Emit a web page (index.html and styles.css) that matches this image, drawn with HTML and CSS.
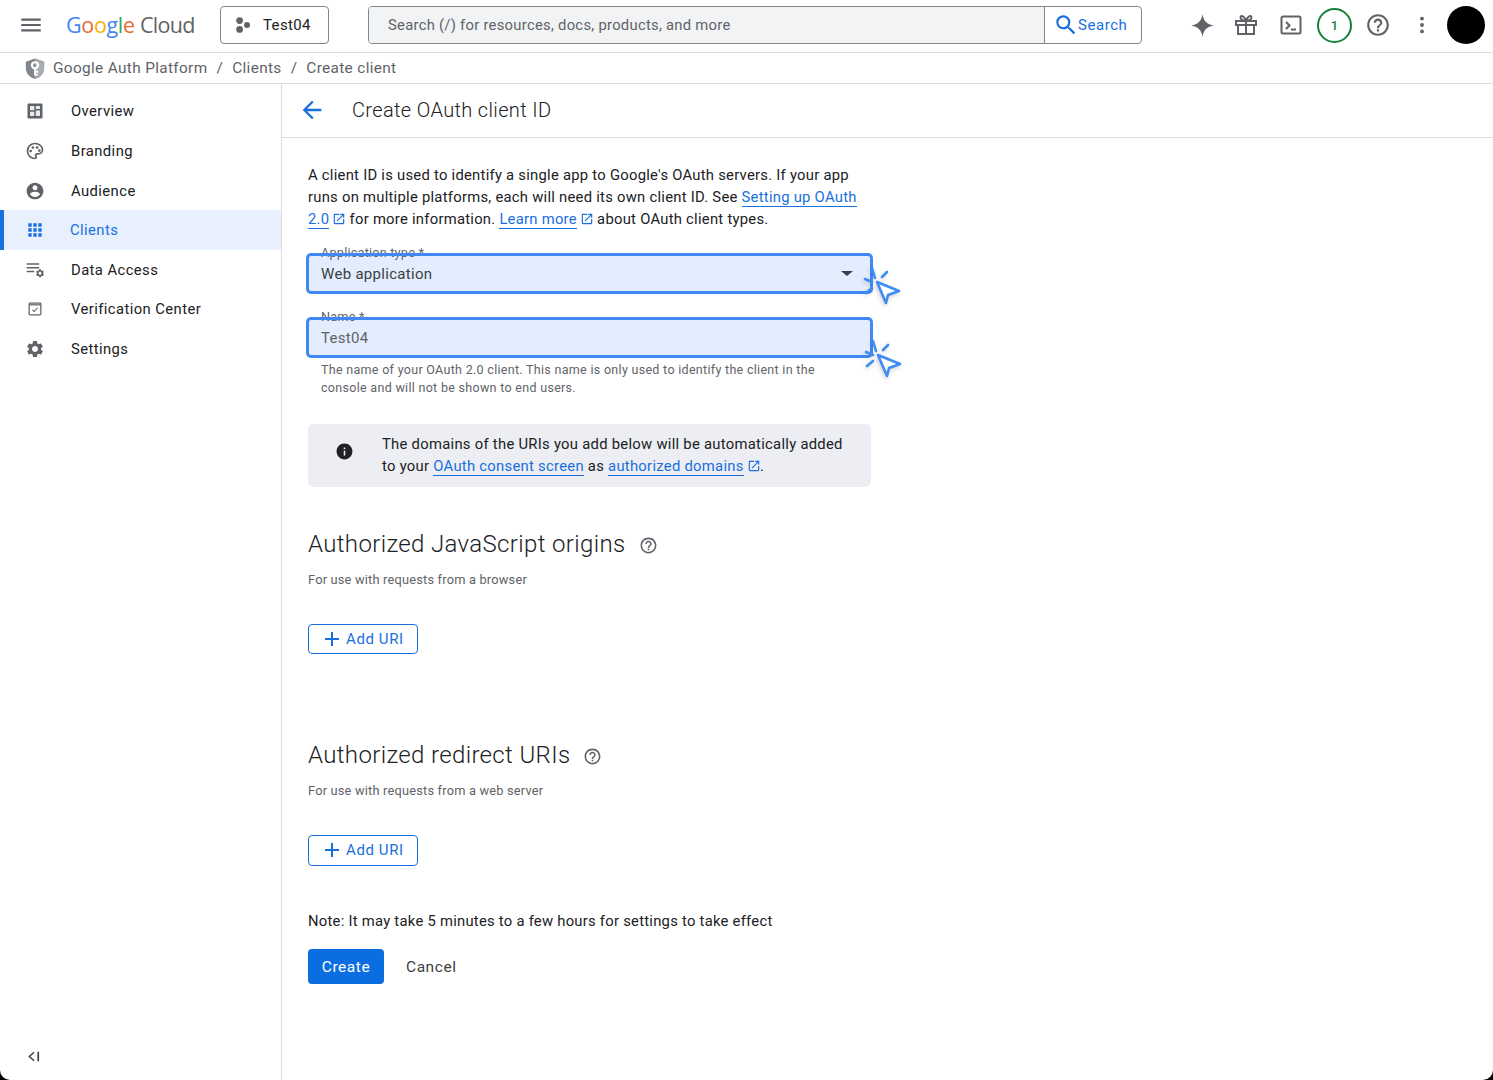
FILE: index.html
```html
<!DOCTYPE html>
<html lang="en">
<head>
<meta charset="utf-8">
<title>Create OAuth client ID</title>
<link rel="stylesheet" href="styles.css">
</head>
<body>
<svg class="defs" width="0" height="0" aria-hidden="true">
  <symbol id="i-help" viewBox="0 0 24 24"><path d="M11 18h2v-2h-2v2zm1-16C6.48 2 2 6.48 2 12s4.48 10 10 10 10-4.48 10-10S17.52 2 12 2zm0 18c-4.41 0-8-3.59-8-8s3.59-8 8-8 8 3.59 8 8-3.59 8-8 8zm0-14c-2.21 0-4 1.79-4 4h2c0-1.1.9-2 2-2s2 .9 2 2c0 2-3 1.75-3 5h2c0-2.25 3-2.5 3-5 0-2.21-1.79-4-4-4z"/></symbol>
  <symbol id="i-open" viewBox="0 0 24 24"><path d="M19 19H5V5h7V3H5c-1.11 0-2 .9-2 2v14c0 1.1.89 2 2 2h14c1.1 0 2-.9 2-2v-7h-2v7zM14 3v2h3.59l-9.83 9.83 1.41 1.41L19 6.41V10h2V3h-7z"/></symbol>
  <symbol id="i-add" viewBox="0 0 24 24"><path d="M19 13h-6v6h-2v-6H5v-2h6V5h2v6h6v2z"/></symbol>
  <symbol id="i-cursor" viewBox="0 0 44 44"><g fill="none" stroke="#3f8cf5" stroke-width="2.600" stroke-linecap="round" stroke-linejoin="round"><path d="M17 17l22 9-11 4-2 8z" fill="#fff"/><path d="M12 3l3 10M27 7l-5 5M5 14l7 3M6 28l6-5"/></g></symbol>
</svg>
<div class="app">
  <header class="topbar">
    <button class="icon-btn menu" aria-label="Menu"><svg viewBox="0 0 24 24" class="ic24"><path d="M3 18h18v-2H3v2zm0-5h18v-2H3v2zm0-7v2h18V6H3z"/></svg></button>
    <div class="logo"><span class="lb">G</span><span class="lr">o</span><span class="ly">o</span><span class="lb">g</span><span class="lg">l</span><span class="lr">e</span> <span class="lc">Cloud</span></div>
    <button class="project">
      <svg viewBox="0 0 16 16" class="ic-project"><circle cx="4.600" cy="3.600" r="3.400"/><circle cx="12" cy="8" r="3"/><circle cx="4.600" cy="12.400" r="3.400"/></svg>
      <span>Test04</span>
    </button>
    <div class="search">
      <div class="search-input">Search (/) for resources, docs, products, and more</div>
      <button class="search-btn"><svg viewBox="0 0 24 24" class="ic-search"><path d="M15.5 14h-.79l-.28-.27A6.471 6.471 0 0 0 16 9.5 6.5 6.5 0 1 0 9.5 16c1.61 0 3.09-.59 4.23-1.57l.27.28v.79l5 4.99L20.49 19l-4.99-5zm-6 0C7.01 14 5 11.99 5 9.5S7.01 5 9.5 5 14 7.01 14 9.5 11.99 14 9.5 14z"/></svg><span>Search</span></button>
    </div>
    <div class="tools">
      <svg viewBox="0 0 24 24" class="tool spark"><path d="M12 1C12.900 7.600 16.400 11.100 23 12 16.400 12.900 12.900 16.400 12 23 11.100 16.400 7.600 12.900 1 12 7.600 11.100 11.100 7.600 12 1z"/></svg>
      <svg viewBox="0 0 24 24" class="tool gift"><g fill="none" stroke="#5f6368" stroke-width="2"><path d="M2 8h20v4H2zM4 12v9h16v-9M12 8v13"/><path d="M12 7.500C10 3 6.500 1.500 6.500 4.500c0 2 2.500 3 5.500 3zM12 7.500c2-4.500 5.500-6 5.500-3 0 2-2.500 3-5.500 3z"/></g></svg>
      <svg viewBox="0 0 24 24" class="tool term"><rect x="2.500" y="3.500" width="19" height="17" rx="1.500" fill="none" stroke="#5f6368" stroke-width="2"/><path d="M7 9l3.500 3.500L7 16M12 16.500h5" fill="none" stroke="#5f6368" stroke-width="2"/></svg>
      <span class="badge">1</span>
      <svg class="tool help"><use href="#i-help"/></svg>
      <svg viewBox="0 0 24 24" class="tool more"><circle cx="12" cy="5" r="2.100"/><circle cx="12" cy="12" r="2.100"/><circle cx="12" cy="19" r="2.100"/></svg>
      <span class="avatar"></span>
    </div>
  </header>
  <nav class="crumbs">
    <svg viewBox="0 0 24 24" class="shield"><path d="M12 1l10 3.500v7c0 6-4.200 10.500-10 12-5.800-1.500-10-6-10-12v-7z" fill="#80868b"/><path d="M12 1l10 3.500v7c0 6-4.200 10.500-10 12z" fill="#a9adb1"/><circle cx="12" cy="8.500" r="3.300" fill="none" stroke="#fff" stroke-width="2.400"/><path d="M12 12v8M12 15.500h3.500M12 18.700h3" stroke="#fff" stroke-width="2" fill="none"/></svg>
    <span>Google Auth Platform</span><span class="sep">/</span><span>Clients</span><span class="sep">/</span><span>Create client</span>
  </nav>
  <div class="main">
    <aside class="side">
      <ul class="nav">
        <li class="nav-item"><svg viewBox="0 0 24 24" class="nav-ic"><rect x="3" y="3" width="18" height="18" rx="1.500" fill="#5f6368"/><path d="M6 6h5.200v5.200H6zM13 6h5v3.500h-5zM13 11.300h5V18h-5zM6 13h5.200v5H6z" fill="#e8eaed"/></svg><span>Overview</span></li>
        <li class="nav-item"><svg viewBox="0 0 24 24" class="nav-ic"><path fill="none" stroke="#5f6368" stroke-width="2" d="M12 3c-5 0-9 4-9 9s4 9 9 9c1 0 1.500-.7 1.500-1.500 0-1-.8-1.200-.8-2.200 0-1 .8-1.800 1.800-1.800H16c2.800 0 5-2.200 5-5 0-4.100-4-7.500-9-7.500z"/><circle cx="6.800" cy="12" r="1.600"/><circle cx="9.500" cy="7.800" r="1.600"/><circle cx="14.500" cy="7.800" r="1.600"/><circle cx="17.200" cy="11.500" r="1.600"/></svg><span>Branding</span></li>
        <li class="nav-item"><svg viewBox="0 0 24 24" class="nav-ic"><path d="M12 2C6.480 2 2 6.480 2 12s4.480 10 10 10 10-4.480 10-10S17.520 2 12 2zm0 3c1.660 0 3 1.340 3 3s-1.340 3-3 3-3-1.340-3-3 1.340-3 3-3zm0 14.200c-2.500 0-4.710-1.280-6-3.220.030-1.990 4-3.080 6-3.080 1.990 0 5.970 1.090 6 3.080-1.290 1.940-3.500 3.220-6 3.220z"/></svg><span>Audience</span></li>
        <li class="nav-item active"><svg viewBox="0 0 24 24" class="nav-ic"><path d="M4 4h4v4H4zM10 4h4v4h-4zM16 4h4v4h-4zM4 10h4v4H4zM10 10h4v4h-4zM16 10h4v4h-4zM4 16h4v4H4zM10 16h4v4h-4zM16 16h4v4h-4z"/></svg><span>Clients</span></li>
        <li class="nav-item"><svg viewBox="0 0 24 24" class="nav-ic"><path d="M2 4h15v1.600H2zM2 8.500h15v1.600H2zM2 13h9v1.600H2z"/><path transform="translate(12 10) scale(.5)" d="M19.140 12.940c.040-.3.060-.61.060-.94 0-.32-.020-.64-.070-.94l2.030-1.580c.18-.14.230-.41.120-.61l-1.920-3.320c-.12-.22-.37-.29-.59-.22l-2.390.96c-.5-.38-1.030-.7-1.620-.94l-.36-2.540c-.040-.24-.24-.41-.48-.41h-3.840c-.24 0-.43.17-.47.41l-.36 2.540c-.59.24-1.130.57-1.620.94l-2.390-.96c-.22-.08-.47 0-.59.22L2.740 8.870c-.12.21-.08.47.12.61l2.030 1.580c-.05.3-.09.63-.09.94s.020.64.070.94l-2.030 1.580c-.18.14-.23.41-.12.61l1.920 3.320c.12.22.37.29.59.22l2.390-.96c.5.38 1.030.7 1.620.94l.36 2.540c.05.24.24.41.48.41h3.840c.24 0 .44-.17.47-.41l.36-2.540c.59-.24 1.130-.56 1.620-.94l2.390.96c.22.08.47 0 .59-.22l1.920-3.320c.12-.22.070-.47-.12-.61l-2.010-1.580zM12 15.600c-1.980 0-3.600-1.620-3.600-3.600s1.620-3.600 3.600-3.600 3.600 1.620 3.600 3.600-1.620 3.600-3.600 3.600z"/></svg><span>Data Access</span></li>
        <li class="nav-item"><svg viewBox="0 0 24 24" class="nav-ic"><g fill="none" stroke="#5f6368"><rect x="5" y="5" width="14" height="14" rx="1" stroke-width="1.500"/><path d="M5 7h14" stroke-width="1.500"/><path d="M9 13l2 2 4-4.500" stroke-width="1.300"/></g></svg><span>Verification Center</span></li>
        <li class="nav-item"><svg viewBox="0 0 24 24" class="nav-ic"><path d="M19.140 12.940c.040-.3.060-.61.060-.94 0-.32-.020-.64-.070-.94l2.030-1.580c.18-.14.230-.41.120-.61l-1.920-3.320c-.12-.22-.37-.29-.59-.22l-2.390.96c-.5-.38-1.030-.7-1.620-.94l-.36-2.540c-.040-.24-.24-.41-.48-.41h-3.840c-.24 0-.43.17-.47.41l-.36 2.540c-.59.24-1.130.57-1.620.94l-2.390-.96c-.22-.08-.47 0-.59.22L2.740 8.870c-.12.21-.08.47.12.61l2.030 1.580c-.05.3-.09.63-.09.94s.020.64.070.94l-2.030 1.580c-.18.14-.23.41-.12.61l1.920 3.320c.12.22.37.29.59.22l2.390-.96c.5.38 1.030.7 1.620.94l.36 2.540c.05.24.24.41.48.41h3.840c.24 0 .44-.17.47-.41l.36-2.540c.59-.24 1.130-.56 1.620-.94l2.390.96c.22.08.47 0 .59-.22l1.920-3.320c.12-.22.070-.47-.12-.61l-2.010-1.580zM12 15.600c-1.980 0-3.600-1.620-3.600-3.600s1.620-3.600 3.600-3.600 3.600 1.620 3.600 3.600-1.620 3.600-3.600 3.600z"/></svg><span>Settings</span></li>
      </ul>
      <svg viewBox="0 0 16 16" class="collapse"><path d="M7.500 3.500L2.500 8l5 4.500" fill="none" stroke="#3c4043" stroke-width="1.600"/><path d="M12 3v10" stroke="#3c4043" stroke-width="1.800"/></svg>
    </aside>
    <main class="content">
      <div class="title-bar">
        <svg viewBox="0 0 24 24" class="back"><path d="M20 11H7.830l5.590-5.590L12 4l-8 8 8 8 1.410-1.410L7.830 13H20v-2z"/></svg>
        <h1>Create OAuth client ID</h1>
      </div>
      <div class="form">
        <p class="intro">A client ID is used to identify a single app to Google's OAuth servers. If your app runs on multiple platforms, each will need its own client ID. See <a href="#">Setting up OAuth 2.0</a><svg class="ext"><use href="#i-open"/></svg> for more information. <a href="#">Learn more</a><svg class="ext"><use href="#i-open"/></svg> about OAuth client types.</p>
        <div class="field field-select">
          <span class="label">Application type *</span>
          <div class="control"><span class="val-dark">Web application</span><span class="caret"></span></div>
          <svg class="cursor"><use href="#i-cursor"/></svg>
        </div>
        <div class="field field-name">
          <span class="label">Name *</span>
          <div class="control"><span class="val">Test04</span></div>
          <svg class="cursor cursor-low"><use href="#i-cursor"/></svg>
        </div>
        <p class="hint">The name of your OAuth 2.0 client. This name is only used to identify the client in the console and will not be shown to end users.</p>
        <div class="info">
          <svg viewBox="0 0 24 24" class="info-ic"><path d="M12 2C6.480 2 2 6.480 2 12s4.480 10 10 10 10-4.480 10-10S17.520 2 12 2zm1 15h-2v-6h2v6zm0-8h-2V7h2v2z"/></svg>
          <p>The domains of the URIs you add below will be automatically added to your <a href="#">OAuth consent screen</a> as <a href="#">authorized domains</a><svg class="ext"><use href="#i-open"/></svg>.</p>
        </div>
        <section class="block block-js">
          <h2>Authorized JavaScript origins <svg class="help-sm"><use href="#i-help"/></svg></h2>
          <p class="sub">For use with requests from a browser</p>
          <button class="add"><svg class="add-ic"><use href="#i-add"/></svg>Add URI</button>
        </section>
        <section class="block block-redirect">
          <h2>Authorized redirect URIs <svg class="help-sm"><use href="#i-help"/></svg></h2>
          <p class="sub">For use with requests from a web server</p>
          <button class="add"><svg class="add-ic"><use href="#i-add"/></svg>Add URI</button>
        </section>
        <p class="note">Note: It may take 5 minutes to a few hours for settings to take effect</p>
        <div class="actions">
          <button class="create">Create</button>
          <button class="cancel">Cancel</button>
        </div>
      </div>
    </main>
  </div>
</div>
</body>
</html>
```
FILE: styles.css
```css
* { box-sizing: border-box; }
html { background: #000; }
body { margin: 0; font-family: Roboto, "Liberation Sans", sans-serif; color: #202124; }
button { font: inherit; background: none; border: 0; padding: 0; color: inherit; }
svg { display: block; fill: #5f6368; }
.defs { position: absolute; }
ul, p, h1, h2 { margin: 0; padding: 0; font-weight: 400; }
a { color: #1a6fde; text-decoration: none; border-bottom: 1px solid #1a6fde; }

.app { width: 1493px; height: 1080px; background: #fff; border-radius: 0 0 10px 10px; overflow: hidden; display: flex; flex-direction: column; }

/* Top bar */
.topbar { height: 53px; flex: none; border-bottom: 1px solid #dadce0; display: flex; align-items: center; padding-bottom: 2px; }
.menu { margin-left: 18px; width: 26px; height: 26px; }
.ic24 { width: 26px; height: 26px; }
.logo { margin-left: 22px; width: 130px; padding-bottom: 2px; font-family: "Open Sans", sans-serif; font-size: 21.5px; font-weight: 500; letter-spacing: -.35px; white-space: nowrap; }
.lb { color: #4285f4; } .lr { color: #ea6a35; } .ly { color: #f4b400; } .lg { color: #34a853; } .lc { color: #5f6368; font-weight: 400; letter-spacing: -.7px; }
.project { margin-left: 24px; width: 109px; height: 38px; border: 1px solid #80868b; border-radius: 4px; display: flex; align-items: center; padding-left: 14px; font-size: 15px; letter-spacing: .35px; gap: 12px; }
.ic-project { width: 16px; height: 16px; }
.search { margin-left: 39px; width: 774px; height: 38px; border: 1px solid #80868b; border-radius: 4px; display: flex; overflow: hidden; }
.search-input { flex: 1; background: #f1f3f4; padding-left: 19px; line-height: 36px; font-size: 14.8px; letter-spacing: .27px; color: #5f6368; border-right: 1px solid #80868b; }
.search-btn { width: 96px; flex: none; display: flex; align-items: center; padding-left: 8px; color: #1a6fde; font-size: 15px; letter-spacing: .55px; font-weight: 450; }
.ic-search { width: 26px; height: 26px; fill: #1a6fde; margin-right: -1px; }
.tools { display: flex; align-items: center; margin-left: 48px; }
.tool { flex: none; }
.spark { width: 25px; height: 25px; }
.gift { width: 24px; height: 24px; margin-left: 19px; }
.term { width: 24px; height: 24px; margin-left: 21px; }
.badge { margin-left: 14px; width: 35px; height: 35px; border: 2px solid #188038; border-radius: 50%; color: #188038; font-size: 13px; font-weight: 500; display: flex; align-items: center; justify-content: center; }
.help { width: 26px; height: 26px; margin-left: 13px; }
.more { width: 22px; height: 22px; margin-left: 20px; }
.avatar { margin-left: 14px; width: 38px; height: 38px; border-radius: 50%; background: #000; }

/* Breadcrumb */
.crumbs { height: 31px; flex: none; border-bottom: 1px solid #dadce0; display: flex; align-items: center; padding-left: 24px; font-size: 15.4px; letter-spacing: .33px; color: #5f6368; white-space: nowrap; }
.shield { width: 22px; height: 25px; margin-right: 7px; }
.sep { margin: 0 9px; }

/* Main */
.main { flex: 1; display: flex; min-height: 0; }
.side { width: 282px; flex: none; border-right: 1px solid #dadce0; display: flex; flex-direction: column; padding-top: 7.65px; }
.nav { list-style: none; }
.nav-item { height: 39.6px; display: flex; align-items: center; padding-left: 25px; font-size: 14.8px; letter-spacing: .42px; color: #202124; }
.nav-item span { margin-left: 26px; }
.nav-ic { width: 20px; height: 20px; }
.active { background: #e8f0fe; border-left: 4px solid #1a6fde; padding-left: 21px; color: #1a6fde; }
.active svg { fill: #1a6fde; }
.nav-item.active span { margin-left: 25px; }
.collapse { width: 15px; height: 15px; margin: auto 0 16px 27px; }

.content { flex: 1; min-width: 0; }
.title-bar { height: 54px; border-bottom: 1px solid #dadce0; display: flex; align-items: center; padding: 0 0 2px 16px; }
.back { width: 28px; height: 28px; fill: #1a6fde; }
h1 { margin-left: 26px; font-size: 20px; letter-spacing: .35px; font-weight: 350; color: #202124; }

.form { padding: 26px 0 0 26px; width: 589px; }
.intro { width: 555px; font-size: 14.8px; line-height: 22px; letter-spacing: .26px; color: #202124; }
.ext { display: inline-block; width: 14px; height: 14px; fill: #1a6fde; vertical-align: -2px; margin: 0 -.7px 0 3px; }

.field { position: relative; width: 567px; margin-left: -2px; }
.field-select { margin-top: 23px; }
.field-name { margin-top: 23px; }
.label { position: absolute; left: 15px; top: -8px; font-size: 12.7px; letter-spacing: .2px; color: #5f6368; }
.control { position: relative; height: 41px; background: rgba(66, 133, 244, .15); border: 3px solid #4088f5; border-radius: 5px; display: flex; align-items: center; justify-content: space-between; padding: 0 17px 0 12px; font-size: 15px; letter-spacing: .3px; }
.val { color: #5f6368; }
.val-dark { color: #3c4043; }
.caret { width: 0; height: 0; border-left: 6px solid transparent; border-right: 6px solid transparent; border-top: 5px solid #3c4043; }
.cursor { position: absolute; left: 554px; top: 12px; width: 44px; height: 44px; filter: drop-shadow(-1px 2px 2px rgba(60, 64, 67, .25)); }
.cursor-low { left: 555px; top: 21px; }
.hint { margin: 3px 0 0 13px; width: 510px; font-size: 12.5px; line-height: 18px; letter-spacing: .3px; color: #5f6368; }

.info { margin-top: 27px; width: 563px; height: 63px; background: #eceef3; border-radius: 5px; display: flex; align-items: center; padding-bottom: 2px; font-size: 14.8px; line-height: 22px; letter-spacing: .28px; }
.info-ic { width: 19px; height: 19px; fill: #202124; margin: 18px 28px 0 27px; flex: none; align-self: flex-start; }
.info p { width: 470px; }

h2 { font-size: 24px; letter-spacing: .36px; font-weight: 350; color: #202124; display: flex; align-items: center; gap: 13px; height: 30px; }
.help-sm { width: 19px; height: 19px; margin-top: 2px; }
.block-js { margin-top: 42px; }
.block-redirect { margin-top: 86px; }
.block-redirect .add { height: 31px; padding-bottom: 1px; }
.sub { margin-top: 12px; font-size: 12.8px; line-height: 18px; letter-spacing: .2px; color: #5f6368; }
.add { margin-top: 35px; width: 110px; height: 30px; border: 1px solid #1a6fde; border-radius: 4px; color: #1a6fde; display: flex; align-items: center; padding-left: 11px; font-size: 15px; letter-spacing: .6px; font-weight: 450; gap: 2px; }
.add-ic { width: 24px; height: 24px; fill: #1a6fde; }
.note { margin-top: 45px; font-size: 14.8px; line-height: 20px; letter-spacing: .255px; color: #202124; }
.actions { margin-top: 18px; display: flex; align-items: center; gap: 22px; }
.create { width: 76px; height: 35px; background: #0b6ee0; color: #fff; border-radius: 4px; font-size: 15.5px; letter-spacing: .55px; font-weight: 450; }
.cancel { font-size: 15.5px; letter-spacing: .55px; font-weight: 450; color: #3c4043; }
```
